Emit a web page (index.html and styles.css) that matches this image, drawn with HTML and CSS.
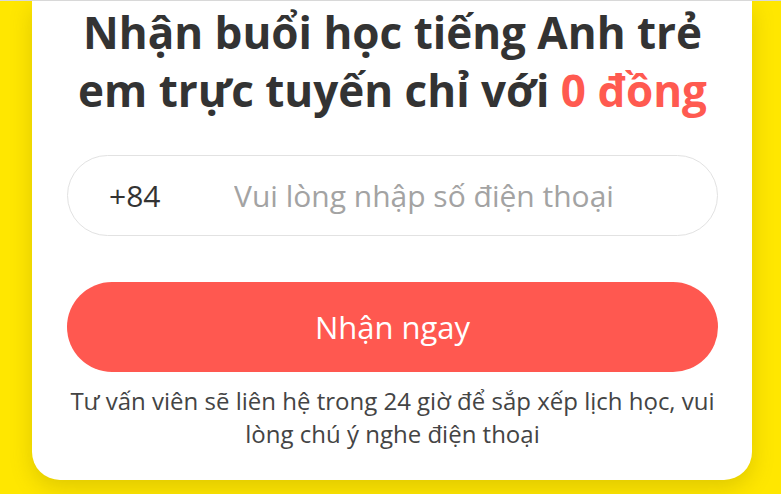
FILE: index.html
```html
<!DOCTYPE html>
<html lang="vi">
<head>
<meta charset="utf-8">
<title>Nhận buổi học tiếng Anh</title>
<link rel="stylesheet" href="styles.css">
</head>
<body>
<div class="page">
  <div class="card">
    <h1 class="title">Nhận buổi học tiếng Anh trẻ<br>em trực tuyến chỉ với <span class="accent">0 đồng</span></h1>
    <div class="phone">
      <span class="code">+84</span>
      <input class="phone-input" type="tel" placeholder="Vui lòng nhập số điện thoại">
    </div>
    <button class="cta" type="button">Nhận ngay</button>
    <p class="note">Tư vấn viên sẽ liên hệ trong 24 giờ để sắp xếp lịch học, vui<br>lòng chú ý nghe điện thoại</p>
  </div>
</div>
</body>
</html>
```

FILE: styles.css
```css
html, body {
  margin: 0;
  padding: 0;
}
body {
  background: #ffe700;
  font-family: "Open Sans", "Noto Sans", sans-serif;
  height: 494px;
  overflow: hidden;
  border-top: 1px solid #d8d8d8;
  box-sizing: border-box;
}
.page {
  padding-left: 32px;
}
.card {
  width: 720px;
  box-sizing: border-box;
  background: #fff;
  border-radius: 0 0 28px 28px;
  box-shadow: 0 8px 22px rgba(110, 95, 0, 0.22);
  padding: 2px 34px 30px 35px;
  display: flex;
  flex-direction: column;
}
.title {
  margin: 0;
  text-align: center;
  font-size: 44px;
  line-height: 58px;
  font-weight: 700;
  color: #333;
}
.accent {
  color: #ff5a50;
}
.phone {
  margin-top: 36px;
  height: 81px;
  box-sizing: border-box;
  border: 1px solid #e2e2e2;
  border-radius: 41px;
  display: flex;
  align-items: center;
  padding-left: 41px;
}
.code {
  width: 125px;
  flex: none;
  font-size: 30px;
  color: #333;
}
.phone-input {
  flex: 1;
  min-width: 0;
  border: none;
  outline: none;
  background: transparent;
  font-family: inherit;
  font-size: 30px;
  color: #333;
  padding: 0;
}
.phone-input::placeholder {
  color: #a3a3a3;
}
.cta {
  margin-top: 46px;
  height: 90px;
  border: none;
  border-radius: 45px;
  background: #ff5850;
  color: #fff;
  font-family: inherit;
  font-size: 31px;
  cursor: pointer;
}
.note {
  margin: 12px 0 0;
  text-align: center;
  font-size: 24px;
  line-height: 33px;
  color: #444;
}
```
